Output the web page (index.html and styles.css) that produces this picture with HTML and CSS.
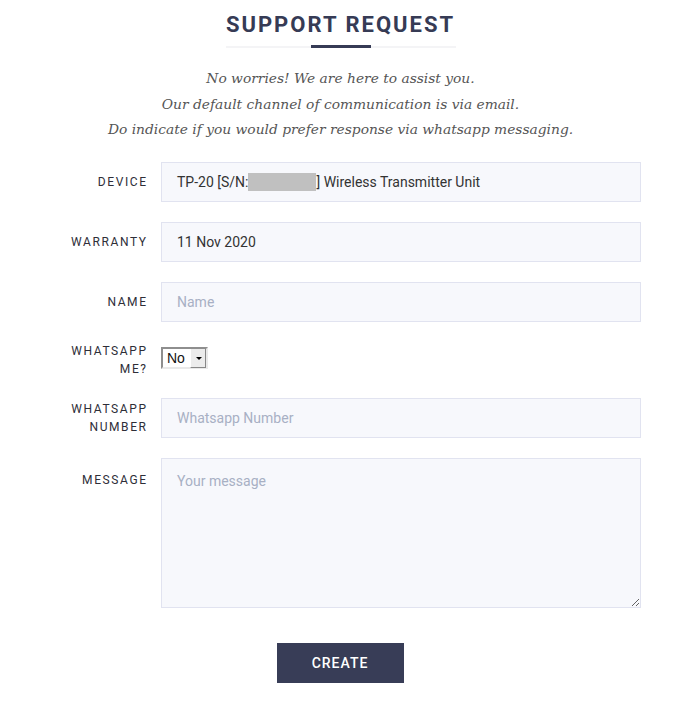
FILE: index.html
```html
<!DOCTYPE html>
<html>
<head>
<meta charset="utf-8">
<link rel="stylesheet" href="styles.css">
</head>
<body>
<div class="page">
  <header class="head">
    <h1 class="title">SUPPORT REQUEST</h1>
    <div class="title-rule"><span class="title-bar"></span></div>
    <p class="intro">No worries! We are here to assist you.<br>Our default channel of communication is via email.<br>Do indicate if you would prefer response via whatsapp messaging.</p>
  </header>
  <form class="form">
    <label class="label">DEVICE</label>
    <div class="field">TP-20 [S/N:<span class="redact"></span>] Wireless Transmitter Unit</div>
    <label class="label">WARRANTY</label>
    <div class="field">11 Nov 2020</div>
    <label class="label">NAME</label>
    <input class="field input" type="text" placeholder="Name">
    <label class="label">WHATSAPP<br>ME?</label>
    <div class="select-cell"><span class="select-wrap"><select class="select"><option>No</option><option>Yes</option></select></span></div>
    <label class="label">WHATSAPP<br>NUMBER</label>
    <input class="field input" type="text" placeholder="Whatsapp Number">
    <label class="label label-top">MESSAGE</label>
    <textarea class="field textarea" placeholder="Your message"></textarea>
  </form>
  <div class="actions"><button class="btn" type="button">CREATE</button></div>
</div>
</body>
</html>
```
FILE: styles.css
```css
* { box-sizing: border-box; }
body { margin: 0; background: #fff; font-family: Roboto, "Liberation Sans", sans-serif; }
.page { width: 678px; padding-top: 10px; }
.head { padding-left: 3px; }
.title {
  margin: 0 auto;
  text-align: center;
  font-size: 22px;
  font-weight: 700;
  letter-spacing: 2px;
  color: #363b55;
  line-height: 30px;
}
.title-rule {
  width: 230px;
  margin: 5px auto 0;
  height: 3px;
  display: flex;
  justify-content: center;
  align-items: center;
  background: linear-gradient(#fff 0 1px, #f4f4f6 1px 3px);
}
.title-bar { width: 60px; height: 3px; background: #363b55; }
.intro {
  margin: 18px 0 0;
  text-align: center;
  font-family: "DejaVu Serif", serif;
  font-style: italic;
  font-size: 13.8px;
  line-height: 25.5px;
  color: #555;
}
.form {
  display: grid;
  grid-template-columns: 146px 480px;
  column-gap: 15px;
  row-gap: 20px;
  margin-top: 19px;
  align-items: center;
}
.label {
  text-align: right;
  font-size: 12px;
  letter-spacing: 1.6px;
  color: #2e2e38;
  line-height: 18px;
  margin-right: -1.6px;
}
.label-top { align-self: start; padding-top: 13px; }
.field {
  height: 40px;
  border: 1px solid #e1e3f0;
  background: #f7f8fc;
  padding: 0 15px;
  font-family: Roboto, sans-serif;
  font-size: 14px;
  color: #333;
  display: flex;
  align-items: center;
  width: 480px;
}
.input { outline: none; }
.input::placeholder, .textarea::placeholder { color: #a8b0c4; }
.textarea { height: 150px; padding: 12px 15px; resize: vertical; display: block; line-height: 20px; }
.redact { display: inline-block; width: 68px; height: 18px; background: #c0c0c0; }
.select-cell { height: 36px; display: flex; align-items: flex-start; padding-top: 5px; }
.select-wrap { position: relative; display: block; }
.select {
  display: block;
  appearance: none;
  -webkit-appearance: none;
  width: 47px;
  height: 22px;
  border: 2px solid;
  border-color: #8e8e8e #e9e9e9 #e9e9e9 #8e8e8e;
  background: #fff;
  font-family: "Liberation Sans", Arial, sans-serif;
  font-size: 14px;
  padding: 0 0 0 4px;
  color: #111;
  border-radius: 0;
}
.select-wrap::after {
  content: "";
  position: absolute;
  right: 2px;
  top: 2px;
  width: 14px;
  height: 18px;
  background: #ececec;
  border-left: 1px solid #fff;
  border-right: 1px solid #888;
  border-bottom: 1px solid #888;
  pointer-events: none;
}
.select-wrap::before {
  content: "";
  position: absolute;
  right: 6px;
  top: 10px;
  border-left: 3px solid transparent;
  border-right: 3px solid transparent;
  border-top: 3px solid #000;
  z-index: 1;
  pointer-events: none;
}
.actions { display: flex; justify-content: center; margin-top: 35px; padding-left: 2px; }
.btn {
  width: 127px;
  height: 40px;
  background: #383d57;
  color: #fff;
  border: none;
  font-family: Roboto, sans-serif;
  font-weight: 500;
  font-size: 14px;
  letter-spacing: 1px;
}
```
